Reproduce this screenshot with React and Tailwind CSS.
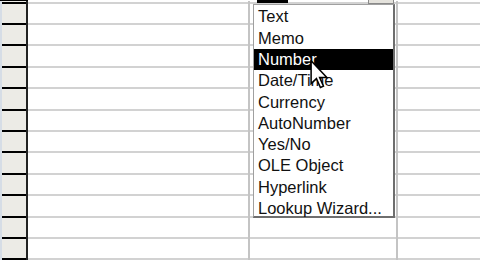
const ROWS = 11;

const items = [
  'Text',
  'Memo',
  'Number',
  'Date/Time',
  'Currency',
  'AutoNumber',
  'Yes/No',
  'OLE Object',
  'Hyperlink',
  'Lookup Wizard...',
];

const Row = ({ height }) => (
  <div className="flex shrink-0" style={{ height }}>
    <div className="flex w-[28px] shrink-0">
      <div className="w-[2px] bg-[#d6dde6]" />
      <div className="flex-1 border-b-2 border-black bg-[#ecebe6]" />
      <div className="w-[2px] bg-[#222]" />
    </div>
    <div className="flex-1 border-b-2 border-[#d2d2d2] bg-white" />
    <div className="w-[2px] bg-[#c4c4c4]" />
    <div className="w-[146px] shrink-0 border-b-2 border-[#d2d2d2] bg-white" />
    <div className="w-[2px] bg-[#c4c4c4]" />
    <div className="w-[82px] shrink-0 border-b-2 border-[#d2d2d2] bg-white" />
  </div>
);

const Cursor = () => (
  <svg className="absolute left-[310px] top-[60px]" width="19" height="29" viewBox="0 0 12 19">
    <path
      d="M0.5 0.5 L0.5 15.5 L4 12.2 L6.6 18 L8.6 17.1 L6.1 11.4 L10.8 11.4 Z"
      fill="#fff"
      stroke="#000"
      strokeWidth="1"
      strokeLinejoin="miter"
    />
  </svg>
);

export default function App() {
  return (
    <div
      className="relative h-[270px] w-[480px] overflow-hidden bg-white"
      style={{ fontFamily: '"Liberation Sans", Arial, sans-serif' }}
    >
      <div className="flex flex-col">
        <div className="h-[1px] w-[28px] bg-black" />
        <Row height={3} />
        <Row height={21} />
        {Array.from({ length: ROWS }).map((_, i) => (
          <Row key={i} height={21.4} />
        ))}
      </div>

      {/* combo box remains in the row above */}
      <div className="absolute left-[257px] top-0 h-[3px] w-[31px] bg-black" />
      <div className="absolute left-[368px] top-0 h-[4px] w-[26px] border-x border-b border-[#8a8a8a] bg-[#e4e2dc]" />

      <div className="absolute left-[253px] top-[4px] h-[214px] w-[142px] border-l border-t border-b-2 border-r-2 border-l-[#a0a0a0] border-t-[#a0a0a0] border-b-[#6e6e6e] border-r-[#6e6e6e] bg-white pt-[1px]">
        {items.map((item) => (
          <div
            key={item}
            className={`flex h-[21.3px] items-center pl-[4px] text-[16.5px] leading-none ${
              item === 'Number' ? 'bg-black text-white' : 'text-[#111]'
            }`}
          >
            {item}
          </div>
        ))}
      </div>

      <Cursor />
    </div>
  );
}
